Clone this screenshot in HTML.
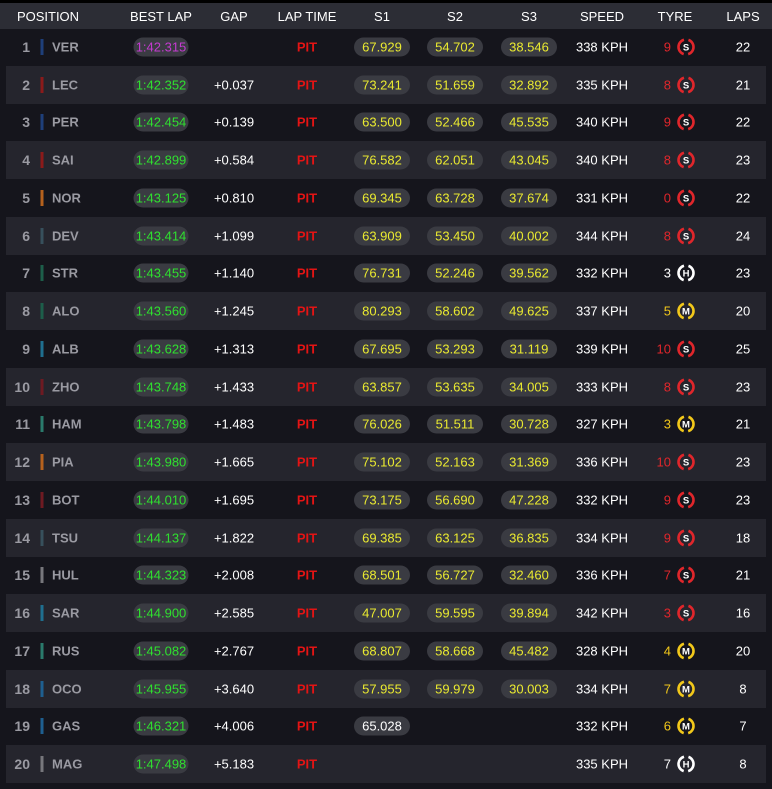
<!DOCTYPE html><html><head><style>
body{margin:0;width:772px;height:789px;background:#15151c;font-family:"Liberation Sans",sans-serif;overflow:hidden;position:relative}
.top{position:absolute;left:0;top:0;width:772px;height:3px;background:#000}
.hd{position:absolute;left:0;top:3px;width:772px;height:26px;background:#2c2d35;color:#fff;font-size:13px}
.hd span{position:absolute;top:6px;transform:translateX(-50%);white-space:nowrap}
.r{position:absolute;left:0;width:772px;height:37.75px;font-size:13px;color:#fff}
.r.e{background:#25252d;left:6px;width:760px}
.r>*{position:absolute;top:50%;transform:translate(-50%,-50%);white-space:nowrap}
.e>*{margin-left:-6px}
.p{color:#9a9aa2;font-weight:bold;font-size:14px;transform:translate(-100%,-50%)!important;left:30px}
.b{left:42px;width:3px;height:16px}
.c{left:52px;color:#9a9aa2;font-weight:bold;font-size:13px;transform:translate(0,-50%)!important}
.bl{left:161px;background:#3a3b42;border-radius:10px;width:55px;height:19px;line-height:19px;text-align:center;color:#2fe02f}
.g{left:234px}
.pit{left:307px;color:#e31414;font-weight:bold;font-size:13px}
.s{background:#3a3b42;border-radius:10px;width:56px;height:19px;line-height:19px;text-align:center;color:#eaea30}
.s1{left:382px}.s2{left:455px}.s3{left:529px}
.sp{left:602px}
.tn{left:671px;transform:translate(-100%,-50%)!important}
.ti{left:686px;width:20px;height:20px}
.lp{left:743px}
</style></head><body>
<div class="top"></div>
<div class="hd"><span style="left:48px">POSITION</span><span style="left:161px">BEST LAP</span><span style="left:234px">GAP</span><span style="left:307px">LAP TIME</span><span style="left:382px">S1</span><span style="left:455px">S2</span><span style="left:529px">S3</span><span style="left:602px">SPEED</span><span style="left:675px">TYRE</span><span style="left:743px">LAPS</span></div>
<svg width="0" height="0" style="position:absolute"><defs>
<g id="S"><circle cx="10" cy="10" r="7.5" fill="none" stroke="#e0262b" stroke-width="2.6" stroke-dasharray="19 4.56" stroke-dashoffset="9.5"/><text x="10" y="13.5" font-size="9.5" font-weight="bold" fill="#fff" text-anchor="middle" font-family="Liberation Sans">S</text></g>
<g id="M"><circle cx="10" cy="10" r="7.5" fill="none" stroke="#f2c81a" stroke-width="2.6" stroke-dasharray="19 4.56" stroke-dashoffset="9.5"/><text x="10" y="13.5" font-size="9.5" font-weight="bold" fill="#fff" text-anchor="middle" font-family="Liberation Sans">M</text></g>
<g id="H"><circle cx="10" cy="10" r="7.5" fill="none" stroke="#fff" stroke-width="2.6" stroke-dasharray="19 4.56" stroke-dashoffset="9.5"/><text x="10" y="13.5" font-size="9.5" font-weight="bold" fill="#fff" text-anchor="middle" font-family="Liberation Sans">H</text></g>
</defs></svg>

<div class="r" style="top:28px"><span class="p">1</span><span class="b" style="background:#1e3f7a"></span><span class="c">VER</span><span class="bl" style="color:#c43bd0">1:42.315</span><span class="g"></span><span class="pit">PIT</span><span class="s s1">67.929</span><span class="s s2">54.702</span><span class="s s3">38.546</span><span class="sp">338 KPH</span><span class="tn" style="color:#e0262b">9</span><svg class="ti"><use href="#S"/></svg><span class="lp">22</span></div>
<div class="r e" style="top:65.75px"><span class="p">2</span><span class="b" style="background:#8b1a1a"></span><span class="c">LEC</span><span class="bl">1:42.352</span><span class="g">+0.037</span><span class="pit">PIT</span><span class="s s1">73.241</span><span class="s s2">51.659</span><span class="s s3">32.892</span><span class="sp">335 KPH</span><span class="tn" style="color:#e0262b">8</span><svg class="ti"><use href="#S"/></svg><span class="lp">21</span></div>
<div class="r" style="top:103.5px"><span class="p">3</span><span class="b" style="background:#1e3f7a"></span><span class="c">PER</span><span class="bl">1:42.454</span><span class="g">+0.139</span><span class="pit">PIT</span><span class="s s1">63.500</span><span class="s s2">52.466</span><span class="s s3">45.535</span><span class="sp">340 KPH</span><span class="tn" style="color:#e0262b">9</span><svg class="ti"><use href="#S"/></svg><span class="lp">22</span></div>
<div class="r e" style="top:141.25px"><span class="p">4</span><span class="b" style="background:#8b1a1a"></span><span class="c">SAI</span><span class="bl">1:42.899</span><span class="g">+0.584</span><span class="pit">PIT</span><span class="s s1">76.582</span><span class="s s2">62.051</span><span class="s s3">43.045</span><span class="sp">340 KPH</span><span class="tn" style="color:#e0262b">8</span><svg class="ti"><use href="#S"/></svg><span class="lp">23</span></div>
<div class="r" style="top:179px"><span class="p">5</span><span class="b" style="background:#b5611d"></span><span class="c">NOR</span><span class="bl">1:43.125</span><span class="g">+0.810</span><span class="pit">PIT</span><span class="s s1">69.345</span><span class="s s2">63.728</span><span class="s s3">37.674</span><span class="sp">331 KPH</span><span class="tn" style="color:#e0262b">0</span><svg class="ti"><use href="#S"/></svg><span class="lp">22</span></div>
<div class="r e" style="top:216.75px"><span class="p">6</span><span class="b" style="background:#37505c"></span><span class="c">DEV</span><span class="bl">1:43.414</span><span class="g">+1.099</span><span class="pit">PIT</span><span class="s s1">63.909</span><span class="s s2">53.450</span><span class="s s3">40.002</span><span class="sp">344 KPH</span><span class="tn" style="color:#e0262b">8</span><svg class="ti"><use href="#S"/></svg><span class="lp">24</span></div>
<div class="r" style="top:254.5px"><span class="p">7</span><span class="b" style="background:#1d5e4a"></span><span class="c">STR</span><span class="bl">1:43.455</span><span class="g">+1.140</span><span class="pit">PIT</span><span class="s s1">76.731</span><span class="s s2">52.246</span><span class="s s3">39.562</span><span class="sp">332 KPH</span><span class="tn">3</span><svg class="ti"><use href="#H"/></svg><span class="lp">23</span></div>
<div class="r e" style="top:292.25px"><span class="p">8</span><span class="b" style="background:#1d5e4a"></span><span class="c">ALO</span><span class="bl">1:43.560</span><span class="g">+1.245</span><span class="pit">PIT</span><span class="s s1">80.293</span><span class="s s2">58.602</span><span class="s s3">49.625</span><span class="sp">337 KPH</span><span class="tn" style="color:#f2c81a">5</span><svg class="ti"><use href="#M"/></svg><span class="lp">20</span></div>
<div class="r" style="top:330px"><span class="p">9</span><span class="b" style="background:#1f6f8f"></span><span class="c">ALB</span><span class="bl">1:43.628</span><span class="g">+1.313</span><span class="pit">PIT</span><span class="s s1">67.695</span><span class="s s2">53.293</span><span class="s s3">31.119</span><span class="sp">339 KPH</span><span class="tn" style="color:#e0262b">10</span><svg class="ti"><use href="#S"/></svg><span class="lp">25</span></div>
<div class="r e" style="top:367.75px"><span class="p">10</span><span class="b" style="background:#6e1a22"></span><span class="c">ZHO</span><span class="bl">1:43.748</span><span class="g">+1.433</span><span class="pit">PIT</span><span class="s s1">63.857</span><span class="s s2">53.635</span><span class="s s3">34.005</span><span class="sp">333 KPH</span><span class="tn" style="color:#e0262b">8</span><svg class="ti"><use href="#S"/></svg><span class="lp">23</span></div>
<div class="r" style="top:405.5px"><span class="p">11</span><span class="b" style="background:#2a7a6c"></span><span class="c">HAM</span><span class="bl">1:43.798</span><span class="g">+1.483</span><span class="pit">PIT</span><span class="s s1">76.026</span><span class="s s2">51.511</span><span class="s s3">30.728</span><span class="sp">327 KPH</span><span class="tn" style="color:#f2c81a">3</span><svg class="ti"><use href="#M"/></svg><span class="lp">21</span></div>
<div class="r e" style="top:443.25px"><span class="p">12</span><span class="b" style="background:#b5611d"></span><span class="c">PIA</span><span class="bl">1:43.980</span><span class="g">+1.665</span><span class="pit">PIT</span><span class="s s1">75.102</span><span class="s s2">52.163</span><span class="s s3">31.369</span><span class="sp">336 KPH</span><span class="tn" style="color:#e0262b">10</span><svg class="ti"><use href="#S"/></svg><span class="lp">23</span></div>
<div class="r" style="top:481px"><span class="p">13</span><span class="b" style="background:#6e1a22"></span><span class="c">BOT</span><span class="bl">1:44.010</span><span class="g">+1.695</span><span class="pit">PIT</span><span class="s s1">73.175</span><span class="s s2">56.690</span><span class="s s3">47.228</span><span class="sp">332 KPH</span><span class="tn" style="color:#e0262b">9</span><svg class="ti"><use href="#S"/></svg><span class="lp">23</span></div>
<div class="r e" style="top:518.75px"><span class="p">14</span><span class="b" style="background:#37505c"></span><span class="c">TSU</span><span class="bl">1:44.137</span><span class="g">+1.822</span><span class="pit">PIT</span><span class="s s1">69.385</span><span class="s s2">63.125</span><span class="s s3">36.835</span><span class="sp">334 KPH</span><span class="tn" style="color:#e0262b">9</span><svg class="ti"><use href="#S"/></svg><span class="lp">18</span></div>
<div class="r" style="top:556.5px"><span class="p">15</span><span class="b" style="background:#77777c"></span><span class="c">HUL</span><span class="bl">1:44.323</span><span class="g">+2.008</span><span class="pit">PIT</span><span class="s s1">68.501</span><span class="s s2">56.727</span><span class="s s3">32.460</span><span class="sp">336 KPH</span><span class="tn" style="color:#e0262b">7</span><svg class="ti"><use href="#S"/></svg><span class="lp">21</span></div>
<div class="r e" style="top:594.25px"><span class="p">16</span><span class="b" style="background:#1f6f8f"></span><span class="c">SAR</span><span class="bl">1:44.900</span><span class="g">+2.585</span><span class="pit">PIT</span><span class="s s1">47.007</span><span class="s s2">59.595</span><span class="s s3">39.894</span><span class="sp">342 KPH</span><span class="tn" style="color:#e0262b">3</span><svg class="ti"><use href="#S"/></svg><span class="lp">16</span></div>
<div class="r" style="top:632px"><span class="p">17</span><span class="b" style="background:#2a7a6c"></span><span class="c">RUS</span><span class="bl">1:45.082</span><span class="g">+2.767</span><span class="pit">PIT</span><span class="s s1">68.807</span><span class="s s2">58.668</span><span class="s s3">45.482</span><span class="sp">328 KPH</span><span class="tn" style="color:#f2c81a">4</span><svg class="ti"><use href="#M"/></svg><span class="lp">20</span></div>
<div class="r e" style="top:669.75px"><span class="p">18</span><span class="b" style="background:#1e5f90"></span><span class="c">OCO</span><span class="bl">1:45.955</span><span class="g">+3.640</span><span class="pit">PIT</span><span class="s s1">57.955</span><span class="s s2">59.979</span><span class="s s3">30.003</span><span class="sp">334 KPH</span><span class="tn" style="color:#f2c81a">7</span><svg class="ti"><use href="#M"/></svg><span class="lp">8</span></div>
<div class="r" style="top:707.5px"><span class="p">19</span><span class="b" style="background:#1e5f90"></span><span class="c">GAS</span><span class="bl">1:46.321</span><span class="g">+4.006</span><span class="pit">PIT</span><span class="s s1" style="color:#fff">65.028</span><span class="sp">332 KPH</span><span class="tn" style="color:#f2c81a">6</span><svg class="ti"><use href="#M"/></svg><span class="lp">7</span></div>
<div class="r e" style="top:745.25px"><span class="p">20</span><span class="b" style="background:#77777c"></span><span class="c">MAG</span><span class="bl">1:47.498</span><span class="g">+5.183</span><span class="pit">PIT</span><span class="sp">335 KPH</span><span class="tn">7</span><svg class="ti"><use href="#H"/></svg><span class="lp">8</span></div>
</body></html>
